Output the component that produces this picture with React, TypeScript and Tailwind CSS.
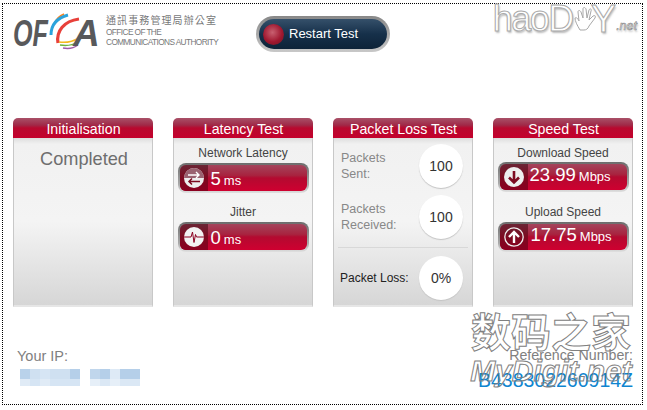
import type { ReactNode } from "react";

function OfcaLogo() {
  return (
    <div className="flex items-start">
      <div className="flex items-center w-[88px] h-[38px] mt-[3px] text-[#58595b] italic font-bold text-[37px] leading-none">
        <span className="w-[35px] shrink-0 inline-block origin-left scale-x-[0.68] whitespace-nowrap">OF</span>
        <svg width="34" height="38" viewBox="0 0 34 38" fill="none" className="shrink-0 -mt-[5px]">
          <path d="M6 12C8 7 11 4 16 2" stroke="#f58220" strokeWidth="1.4" />
          <path d="M3 23C3 13 9 6 20 3" stroke="#2aa3dc" strokeWidth="3" />
          <path d="M10 31C8 19 16 9 31 7" stroke="#e8403a" strokeWidth="3.2" />
          <path d="M11 30C18 31 26 29 31 26" stroke="#f5b91e" strokeWidth="1.5" />
          <path d="M12 33C18 34 25 33 30 30" stroke="#6cb33f" strokeWidth="1.4" />
          <path d="M15 36C20 37 26 36 30 33" stroke="#a15ca8" strokeWidth="1.4" />
        </svg>
        <span className="-ml-[9px]">A</span>
      </div>
      <div className="ml-[5px] text-[#777879] text-[8.3px] tracking-[-0.6px] leading-[10px]">
        <div className="font-['Noto_Sans_CJK_TC',sans-serif] text-[10px] tracking-[1.1px] leading-[12px] mt-[3px] mb-[1px]">通訊事務管理局辦公室</div>
        <div>OFFICE OF THE</div>
        <div>COMMUNICATIONS AUTHORITY</div>
      </div>
    </div>
  );
}

function Panel({ title, children }: { title: string; children: ReactNode }) {
  return (
    <section className="w-[140px] h-[189px] flex flex-col">
      <h2 className="h-[20px] shrink-0 pl-[1px] rounded-t-[5px] bg-[linear-gradient(#a95068_0%,#a02a48_35%,#b8092f_50%,#c4002c_100%)] text-white text-[14.2px] leading-[22px] text-center">
        {title}
      </h2>
      <div className="flex-1 border-x border-b-2 border-[#e6e6e6] border-x-[#c8c8c8] bg-[linear-gradient(#dddddd_0px,#f1f1f1_6px,#f4f4f4_50%,#d6d6d6_100%)] min-h-0">
        {children}
      </div>
    </section>
  );
}

function Metric({ icon, value, unit, pad }: { icon: ReactNode; value: string; unit: string; pad: string }) {
  return (
    <div className="mx-auto w-[131px] h-[30px] rounded-[8px] bg-[linear-gradient(#6c6c6c,#a8a8a8_70%,#e0e0e0)] p-[2px]">
      <div className="flex h-[26px] rounded-[6px] overflow-hidden bg-[linear-gradient(#a4445c_0%,#a8233f_40%,#b30a30_50%,#cf0030_100%)] text-white">
        <div className="w-[28px] shrink-0 flex items-center justify-center bg-[linear-gradient(#6b2535,#7c0a20_50%,#8b0020)]">{icon}</div>
        <div className={`flex items-baseline gap-[3px] ${pad}`}>
          <span className="text-[18.5px]">{value}</span>
          <span className="text-[13px]">{unit}</span>
        </div>
      </div>
    </div>
  );
}

function Bubble({ children }: { children: ReactNode }) {
  return (
    <div className="w-[44px] h-[44px] rounded-full bg-white shadow-[0_1px_1px_#c4c4c4] flex items-center justify-center text-[14px] text-[#333]">
      {children}
    </div>
  );
}

function Mosaic({ top, bottom }: { top: string[]; bottom: string[] }) {
  return (
    <div className="flex flex-col">
      <div className="flex">
        {top.map((c, i) => (
          <span key={i} className="w-[10px] h-[10px]" style={{ background: c }} />
        ))}
      </div>
      <div className="flex">
        {bottom.map((c, i) => (
          <span key={i} className="w-[10px] h-[7px]" style={{ background: c }} />
        ))}
      </div>
    </div>
  );
}

const SwapIcon = (
  <svg width="20" height="20" viewBox="0 0 20 20">
    <circle cx="10" cy="10" r="10" fill="#eee" />
    <path d="M0 10A10 10 0 0 1 20 10Z" fill="#9a6270" />
    <path d="M4 7H15M12 4l3 3-3 3" stroke="#fff" strokeWidth="1.4" fill="none" />
    <path d="M16 13.5H5M8 10.5l-3 3 3 3" stroke="#7c0a20" strokeWidth="1.5" fill="none" />
  </svg>
);

const PulseIcon = (
  <svg width="20" height="20" viewBox="0 0 20 20">
    <circle cx="10" cy="10" r="10" fill="#f2f2f2" />
    <path d="M0 10H7L8.5 5 10 15.5 11.5 7.5 12.5 10H20" stroke="#8b0020" strokeWidth="1" fill="none" />
  </svg>
);

const DownIcon = (
  <svg width="20" height="20" viewBox="0 0 20 20">
    <circle cx="10" cy="10" r="10" fill="#eee" />
    <path d="M10 4V15M5 10.5l5 5 5-5" stroke="#7c0a20" strokeWidth="2.6" fill="none" />
  </svg>
);

const UpIcon = (
  <svg width="20" height="20" viewBox="0 0 20 20">
    <circle cx="10" cy="10" r="9.2" fill="none" stroke="#eee" strokeWidth="1.3" />
    <path d="M10 16V5M5 10l5-5 5 5" stroke="#fff" strokeWidth="2.4" fill="none" />
  </svg>
);

const HandIcon = (
  <svg width="24" height="26" viewBox="0 0 24 26" className="shrink-0">
    <path
      d="M7 24C4 19 2 15 2 12c2-1 3 1 4 3L5 6c0-2 2-2 3 0l2 6 0-9c0-2 2-2 3 0l1 9 2-8c1-2 3-1 2 1l-2 9 4-4c2-1 3 0 2 2l-6 8c-1 3-3 4-5 4Z"
      fill="#fff"
      stroke="#a8a8a8"
      strokeWidth="1"
    />
  </svg>
);

export default function App() {
  return (
    <div className="w-[647px] h-[410px] bg-white overflow-hidden pt-[3px] pl-[2px] font-['Liberation_Sans',Arial,sans-serif]">
      <div className="relative w-[641px] h-[402px] border border-dotted border-black">
        {/* top bar */}
        <header className="flex items-start pl-[10px] pt-[7px] h-[114px]">
          <OfcaLogo />
          <button className="absolute left-[253px] top-[12px] w-[134px] h-[36px] rounded-full bg-[linear-gradient(#888,#c8c8c8)] p-[3px]">
            <span className="flex items-center h-full rounded-full bg-[linear-gradient(#35506a,#16304a_50%,#0d2338)] text-white text-[13px]">
              <span className="w-[21px] h-[21px] ml-[4px] rounded-full bg-[radial-gradient(circle_at_45%_40%,#c86070,#a01830_55%,#6a1420)]" />
              <span className="ml-[5px]">Restart Test</span>
            </span>
          </button>
          <div className="absolute right-[5px] -top-[4px] flex items-center text-[36px] leading-[38px] text-white [-webkit-text-stroke:1px_#aaaaaa] [text-shadow:1px_2px_2px_#bbb]">
            <span className="tracking-[-1.5px]">haoD</span>
            {HandIcon}
            <span className="-ml-[6px] text-[38px]">Y</span>
            <span className="text-[12.5px] italic self-end leading-[24px] [-webkit-text-stroke:0.6px_#888]">.net</span>
          </div>
        </header>

        {/* panels */}
        <main className="flex gap-[20px] pl-[10px]">
          <Panel title="Initialisation">
            <p className="text-center pl-[2px] text-[18.2px] text-[#6e6e6e] pt-[8px]">Completed</p>
          </Panel>

          <Panel title="Latency Test">
            <div className="flex flex-col items-center pt-[8px] text-[#444] text-[12px]">
              <p className="leading-[15px] mb-[2px]">Network Latency</p>
              <Metric icon={SwapIcon} value="5" unit="ms" pad="pl-[3px] leading-[28px]" />
              <p className="leading-[15px] mt-[12px] mb-[2px]">Jitter</p>
              <Metric icon={PulseIcon} value="0" unit="ms" pad="pl-[3px] leading-[28px]" />
            </div>
          </Panel>

          <Panel title="Packet Loss Test">
            <div className="px-[4px] pt-[6px] text-[12.5px] text-[#888] leading-[16px]">
              <div className="flex items-center justify-between pl-[3px] pr-[5px] mb-[7px]">
                <p>Packets<br />Sent:</p>
                <Bubble>100</Bubble>
              </div>
              <div className="flex items-center justify-between pl-[3px] pr-[5px] pb-[8px] border-b border-[#d8d8d8]">
                <p>Packets<br />Received:</p>
                <Bubble>100</Bubble>
              </div>
              <div className="flex items-center justify-between pl-[2px] pr-[5px] pt-[8px] text-[#222]">
                <p className="text-[12px]">Packet Loss:</p>
                <Bubble>0%</Bubble>
              </div>
            </div>
          </Panel>

          <Panel title="Speed Test">
            <div className="flex flex-col items-center pt-[8px] text-[#444] text-[12px]">
              <p className="leading-[15px] mb-[1px]">Download Speed</p>
              <Metric icon={DownIcon} value="23.99" unit="Mbps" pad="pl-[2px] leading-[22px]" />
              <p className="leading-[15px] mt-[13px] mb-[2px]">Upload Speed</p>
              <Metric icon={UpIcon} value="17.75" unit="Mbps" pad="pl-[3px] leading-[22px]" />
            </div>
          </Panel>
        </main>

        {/* footer */}
        <footer className="flex justify-between pl-[14px] pr-[9px] pt-[41px] text-[14.5px] text-[#808080]">
          <div>
            <p className="leading-[16px]">Your IP:</p>
            <div className="flex gap-[10px] mt-[5px] ml-[3px]">
              <Mosaic
                top={["#b9d2ea", "#cfe0f1", "#d6e5f4", "#cfe0f1", "#cfe0f1", "#b5cfe9"]}
                bottom={["#e0ebf6", "#d6e5f4", "#e0ebf6", "#d6e5f4", "#d6e5f4", "#d6e5f4"]}
              />
              <Mosaic
                top={["#c0d6ec", "#b5cfe9", "#deeaf6", "#b5cfe9", "#b5cfe9"]}
                bottom={["#e6eff8", "#dbe8f5", "#e6eff8", "#dbe8f5", "#dbe8f5"]}
              />
            </div>
          </div>
          <div className="text-right">
            <p className="leading-[16px] text-[14.2px] -mt-[1px]">Reference Number:</p>
            <p className="leading-[20px] mt-[7px] text-[19.5px] text-[#0f85d0]">B438302260914Z</p>
          </div>
        </footer>

        {/* watermark over the reference number */}
        <div className="absolute left-[466px] top-[303px] w-[164px] text-transparent [-webkit-text-stroke:1px_#808080] font-bold text-center">
          <div className="font-['Noto_Sans_CJK_SC',sans-serif] text-[40px] leading-[46px] whitespace-nowrap">数码之家</div>
          <div className="italic text-[30px] leading-[30px] mt-[3px] whitespace-nowrap">MyDigit.net</div>
        </div>
      </div>
    </div>
  );
}
